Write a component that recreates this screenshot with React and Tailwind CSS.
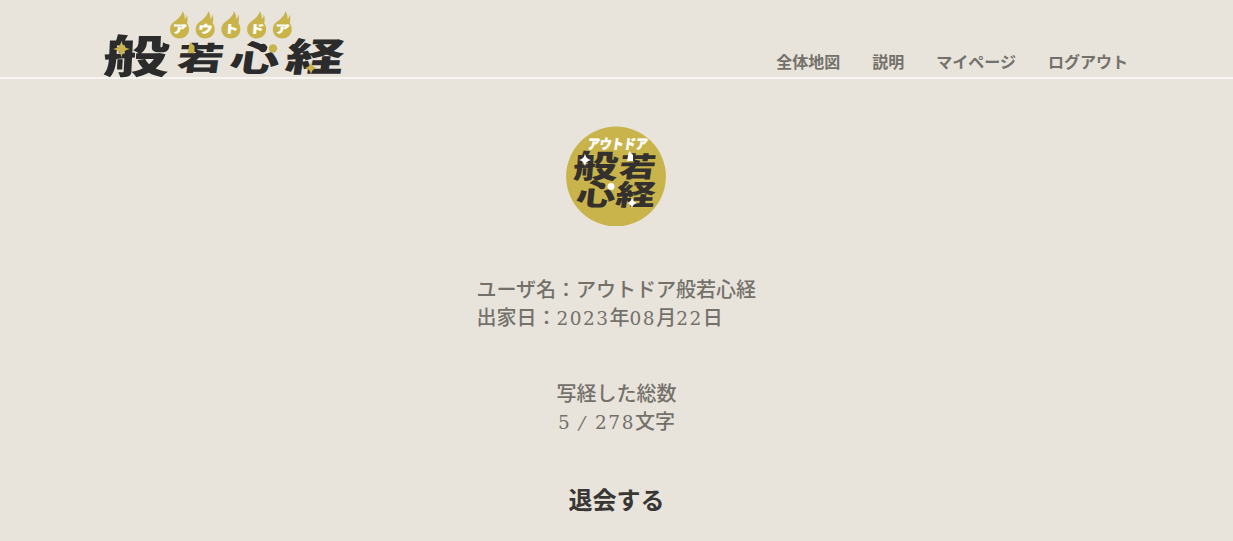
const gold = '#c9b44c';

const logoGlyphs = [
  { char: '般', transform: 'translate(-0.5 62.5) skewX(-3) scale(1.65 1.13)' },
  { char: '若', transform: 'translate(73 60) skewX(-8) scale(1.16 .8)' },
  { char: '心', transform: 'translate(125.5 60.5) skewX(-8) scale(1.24 .88)' },
  { char: '経', transform: 'translate(181 60.5) skewX(-8) scale(1.46 .97)' },
];

function Flame({ x, char }) {
  return (
    <g transform={`translate(${x} 1)`}>
      <path d="M9.500 27.500C4 27.500 0 23.500 0 18.300C0 12 5.500 10.500 9 6.500C11.500 4 12.500 2 12.300 0C14.500 2.500 15 5.500 14.700 8C16 7 16.800 5.500 16.600 3C18 6 17.600 10 17 12C18.200 13.600 19 16 19 18.300C19 23.500 15 27.500 9.500 27.500Z" fill={gold} />
      <text transform="translate(9.500 22.200) skewX(-4) scale(1.2 .92)" textAnchor="middle" fontSize="12" fontWeight="900" fill="#fff" stroke="#fff" strokeWidth=".3">{char}</text>
    </g>
  );
}

function Sparkle({ x, y, r, fill }) {
  return <path transform={`translate(${x} ${y}) scale(${r})`} d="M0-1C.14-.36.36-.14 1 0C.36.14.14.36 0 1C-.14.36-.36.14-1 0C-.36-.14-.14-.36 0-1Z" fill={fill} />;
}

function Logo() {
  return (
    <svg viewBox="0 0 242 68" className="h-[68px] w-[242px] overflow-visible font-['Noto_Sans_CJK_JP',sans-serif]">
      {['ア', 'ウ', 'ト', 'ド', 'ア'].map((char, i) => <Flame key={i} x={67 + i * 25.7} char={char} />)}
      {logoGlyphs.map(({ char, transform }) => (
        <text key={char} transform={transform} fontSize="40" fontWeight="900" fill="#2b2b2b">{char}</text>
      ))}
      <Sparkle x={18.500} y={39} r={8.500} fill={gold} />
      <Sparkle x={208} y={58} r={6.500} fill={gold} />
      <path d="M87 32L91.500 36V43H84.500Z" fill={gold} />
      <circle cx="160" cy="38" r="4.200" fill="#2b2b2b" />
      <circle cx="170" cy="38.500" r="4.200" fill={gold} />
    </svg>
  );
}

function Avatar() {
  return (
    <svg viewBox="0 0 100 100" className="mr-px size-[100px] font-['Noto_Sans_CJK_JP',sans-serif]" fontWeight="900">
      <circle cx="50" cy="50.500" r="49.900" fill={gold} />
      <text transform="translate(21 22.500) skewX(-8)" fontSize="13.500" textLength="60" lengthAdjust="spacingAndGlyphs" fill="#fff" stroke="#fff" strokeWidth=".4">アウトドア</text>
      <g fill="#33302d" fontSize="32">
        <text transform="translate(6.500 51.500) skewX(-4) scale(1.4 1)">般</text>
        <text transform="translate(52 51) skewX(-8) scale(1.14 .87)">若</text>
        <text transform="translate(9.500 79) skewX(-6) scale(1.22 .92)">心</text>
        <text transform="translate(48.500 79) skewX(-8) scale(1.24 .89)">経</text>
      </g>
      <Sparkle x={19} y={34} r={6.500} fill="#fff" />
      <Sparkle x={66} y={77} r={5.500} fill="#fff" />
      <path d="M63 25L67 29V35H61Z" fill="#fff" />
      <circle cx="36" cy="60" r="3.300" fill="#33302d" />
      <circle cx="45" cy="60.500" r="3.500" fill="#fff" />
    </svg>
  );
}

function Digits({ children }) {
  return <span className="font-['DejaVu_Serif',serif] text-[18.5px] leading-none font-normal tracking-[1.5px]">{children}</span>;
}

export default function App() {
  return (
    <div className="h-[541px] overflow-hidden bg-[#e8e4dc] font-['Noto_Sans_CJK_JP',sans-serif] font-bold text-[#74716b]">
      <header className="flex h-[79px] items-start justify-between border-b-2 border-[#f8f6f2] pt-[10px] pr-[105px] pl-[103px]">
        <Logo />
        <nav className="flex gap-8 pt-[39px] text-base leading-6">
          {['全体地図', '説明', 'マイページ', 'ログアウト'].map((label) => <a key={label} href="#">{label}</a>)}
        </nav>
      </header>
      <main className="flex flex-col items-center pt-[47px] text-xl leading-7">
        <Avatar />
        <div className="mt-[49px] w-[280px] font-medium whitespace-nowrap">
          <p>ユーザ名：アウトドア般若心経</p>
          <p>出家日：<Digits>2023</Digits>年<Digits>08</Digits>月<Digits>22</Digits>日</p>
        </div>
        <div className="mt-12 text-center font-medium whitespace-nowrap">
          <p>写経した総数</p>
          <p className="flex items-baseline justify-center">
            <span className="w-[18px] text-left"><Digits>5</Digits></span>
            <span className="w-[19px] -skew-x-12 pl-[3px] text-left font-['DejaVu_Serif',serif] text-lg leading-none font-normal">/</span>
            <Digits>278</Digits>文字
          </p>
        </div>
        <button className="mt-[46px] text-2xl leading-9 font-bold text-[#383734]">退会する</button>
      </main>
    </div>
  );
}
